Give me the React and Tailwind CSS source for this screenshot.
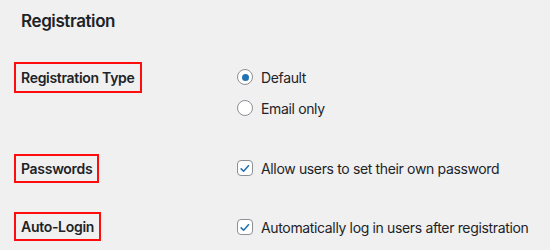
import React from "react";

const Check = () => (
  <span className="w-4 h-4 rounded-[4px] border border-[#8c8f94] bg-white flex items-center justify-center shrink-0">
    <svg viewBox="0 0 20 20" className="w-[15px] h-[15px]" fill="none">
      <path d="M4.5 10.5l3.5 3.5 7-8" stroke="#2271b1" strokeWidth="2.2" strokeLinecap="round" strokeLinejoin="round" />
    </svg>
  </span>
);

const Radio = ({ checked }) => (
  <span className="w-4 h-4 rounded-full border border-[#8c8f94] bg-white flex items-center justify-center shrink-0">
    {checked && <span className="w-[7px] h-[7px] rounded-full bg-[#2271b1]"></span>}
  </span>
);

const Label = ({ children, h }) => (
  <div className={`border-2 border-[#ff0d0d] px-[5px] flex items-center font-semibold text-[14px] tracking-[-0.3px] ${h}`}>
    {children}
  </div>
);

const Option = ({ control, text }) => (
  <label className="flex items-center gap-2 h-4 tracking-[-0.35px]">
    {control}
    <span>{text}</span>
  </label>
);

export default function App() {
  return (
    <div
      className="w-[550px] h-[250px] bg-[#f0f0f1] text-[#1d2327] overflow-hidden pl-[14px] pt-[11px] text-[14px]"
      style={{ fontFamily: "Inter, 'Liberation Sans', sans-serif" }}
    >
      <h2 className="ml-[7px] text-[17px] leading-5 font-semibold tracking-[-0.4px]">Registration</h2>

      {/* Registration Type */}
      <div className="mt-[31px] grid grid-cols-[223px_1fr] items-start">
        <div className="flex">
          <Label h="h-[31px]">Registration Type</Label>
        </div>
        <div className="pt-[7px] flex flex-col gap-[15px]">
          <Option control={<Radio checked />} text="Default" />
          <Option control={<Radio />} text="Email only" />
        </div>
      </div>

      {/* Passwords */}
      <div className="mt-[38px] grid grid-cols-[223px_1fr] items-start">
        <div className="flex">
          <Label h="h-[29px]">Passwords</Label>
        </div>
        <div className="pt-[6px]">
          <Option control={<Check />} text="Allow users to set their own password" />
        </div>
      </div>

      {/* Auto-Login */}
      <div className="mt-[29px] grid grid-cols-[223px_1fr] items-start">
        <div className="flex">
          <Label h="h-[29px]">Auto-Login</Label>
        </div>
        <div className="pt-[7px]">
          <Option control={<Check />} text="Automatically log in users after registration" />
        </div>
      </div>
    </div>
  );
}
